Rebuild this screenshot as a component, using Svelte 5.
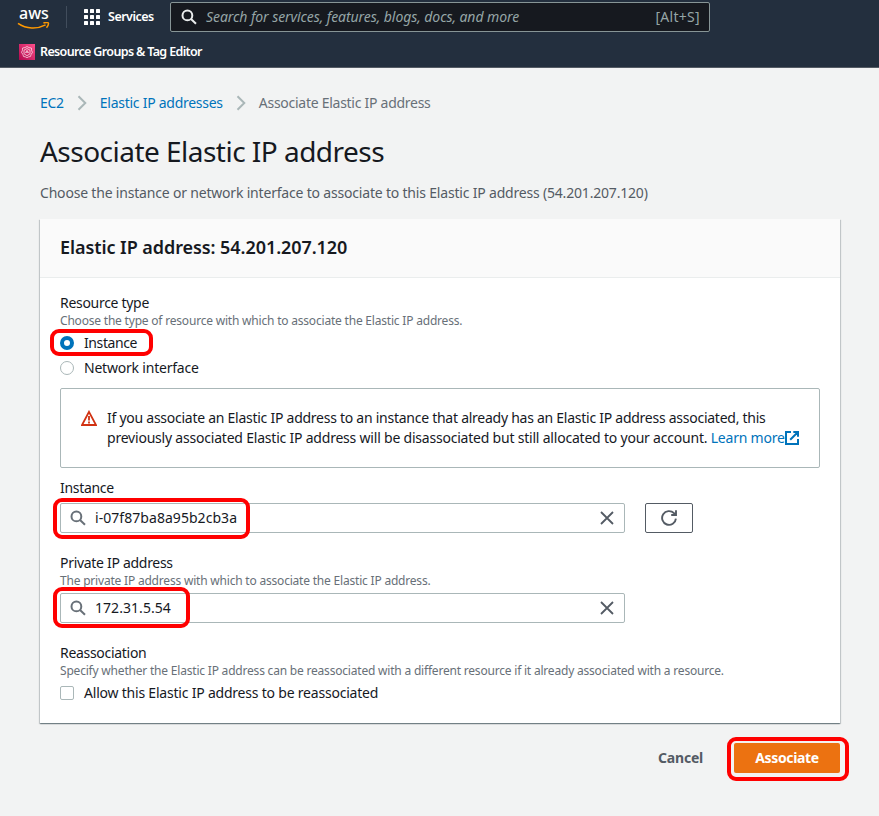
<script lang="ts">
  let resourceType = $state("instance");
  let allowReassociation = $state(false);

  let instance = $state("i-07f87ba8a95b2cb3a");
  let privateIp = $state("172.31.5.54");

  const address = "54.201.207.120";
</script>

{#snippet searchIcon()}
  <svg class="search-icon" viewBox="0 0 16 16">
    <circle cx="6.4" cy="6.4" r="4.9" />
    <path d="M10 10l5 4.8" />
  </svg>
{/snippet}

{#snippet chevron()}
  <svg class="chevron" viewBox="0 0 10 16">
    <path d="M1.5 1.2L8.3 8l-6.8 6.8" />
  </svg>
{/snippet}

{#snippet clearIcon()}
  <svg class="clear-icon" viewBox="0 0 14 14">
    <path d="M1 1l12 12M13 1L1 13" />
  </svg>
{/snippet}

<div class="page">
  <header class="nav">
    <div class="nav-main">
      <div class="logo">
        <span>aws</span>
        <svg viewBox="0 0 34 8">
          <path d="M1 1.4C9.5 7.2 20 7.4 28.6 2.9" />
          <path d="M26.4 1c2-.8 4.8-.7 5 .1.2.9-.5 3.2-1.9 4.6" />
        </svg>
      </div>
      <span class="divider"></span>
      <button class="services">
        <svg viewBox="0 0 16 16">
          {#each [0, 6, 12] as y}
            {#each [0, 6, 12] as x}
              <rect {x} {y} width="4" height="4" rx="0.6" />
            {/each}
          {/each}
        </svg>
        <span>Services</span>
      </button>
      <div class="nav-search">
        {@render searchIcon()}
        <span class="placeholder">Search for services, features, blogs, docs, and more</span>
        <span class="shortcut">[Alt+S]</span>
      </div>
    </div>
    <div class="nav-favorites">
      <svg viewBox="0 0 16 16">
        <defs>
          <linearGradient id="pink" x1="0" y1="1" x2="1" y2="0">
            <stop offset="0" stop-color="#b0084d" />
            <stop offset="1" stop-color="#ff4f8b" />
          </linearGradient>
        </defs>
        <rect width="16" height="16" fill="url(#pink)" />
        <path class="line" d="M8 2.5l2 1.1 2.4.4.2 2.5.9 1.8-1.3 2-.8 2.2-2 .4L8 13.7l-1.4-.8-2-.4-.8-2.2-1.3-2 .9-1.8.2-2.5L6 3.6z" />
        <path class="line" d="M5 6.2l3-1.7 3 1.7v3.6l-3 1.9-3-1.9zM6.4 9l1.6-2.6L9.6 9M7 8.2h2" />
      </svg>
      <span>Resource Groups &amp; Tag Editor</span>
    </div>
  </header>

  <main>
    <nav class="breadcrumbs">
      <a href="#ec2">EC2</a>
      {@render chevron()}
      <a href="#addresses">Elastic IP addresses</a>
      {@render chevron()}
      <span>Associate Elastic IP address</span>
    </nav>

    <h1>Associate Elastic IP address</h1>
    <p class="description">
      Choose the instance or network interface to associate to this Elastic IP address ({address})
    </p>

    <section class="card">
      <h2>Elastic IP address: {address}</h2>

      <div class="card-body">
        <div class="label">Resource type</div>
        <div class="hint">Choose the type of resource with which to associate the Elastic IP address.</div>
        <label class="option">
          <input type="radio" value="instance" bind:group={resourceType} />
          <span class="short">Instance</span>
          <i class="highlight instance-option"></i>
        </label>
        <label class="option second">
          <input type="radio" value="network" bind:group={resourceType} />
          <span>Network interface</span>
        </label>

        <div class="alert">
          <svg class="warning" viewBox="0 0 16 16">
            <path d="M8 1.8L15 15H1z" />
            <path d="M8 6v4.4M8 11.6v2" />
          </svg>
          <p>
            <span class="line-one">If you associate an Elastic IP address to an instance that already has an Elastic IP address associated, this</span><br />
            <span>previously associated Elastic IP address will be disassociated but still allocated to your account.</span>
            <a href="#learn">Learn more<svg class="external" viewBox="0 0 14 14">
              <path d="M6 1H1v12h12V8M8.3 1H13v4.7M13 1L5.2 8.8" />
            </svg></a>
          </p>
        </div>

        <div class="label">Instance</div>
        <div class="row">
          <div class="field">
            {@render searchIcon()}
            <input type="text" bind:value={instance} />
            <button aria-label="Clear" onclick={() => (instance = "")}>{@render clearIcon()}</button>
            <i class="highlight instance-field"></i>
          </div>
          <button class="refresh" aria-label="Refresh">
            <svg viewBox="0 0 16 16">
              <path d="M14.9 8.6A6.9 6.9 0 1 1 13 3.2l1.6 1.6M15 .2V5H10.2" />
            </svg>
          </button>
        </div>

        <div class="label spaced">Private IP address</div>
        <div class="hint">The private IP address with which to associate the Elastic IP address.</div>
        <div class="field">
          {@render searchIcon()}
          <input type="text" bind:value={privateIp} />
          <button aria-label="Clear" onclick={() => (privateIp = "")}>{@render clearIcon()}</button>
          <i class="highlight ip-field"></i>
        </div>

        <div class="label spaced">Reassociation</div>
        <div class="hint">Specify whether the Elastic IP address can be reassociated with a different resource if it already associated with a resource.</div>
        <label class="option">
          <input type="checkbox" bind:checked={allowReassociation} />
          <span>Allow this Elastic IP address to be reassociated</span>
        </label>
      </div>
    </section>

    <div class="actions">
      <button class="cancel">Cancel</button>
      <div class="submit">
        <button class="primary">Associate</button>
        <i class="highlight associate"></i>
      </div>
    </div>
  </main>
</div>

<style>
  :global(body) {
    background: #f2f3f3;
  }
  .page {
    min-height: 816px;
    background: #f2f3f3;
    color: #16191f;
    font: 14px/20px "Noto Sans", "Open Sans", sans-serif;
    white-space: nowrap;
  }
  svg {
    display: block;
    flex: none;
    fill: none;
  }
  button,
  input {
    font: inherit;
    color: inherit;
    letter-spacing: inherit;
  }
  button {
    padding: 0;
    border: none;
    background: none;
    cursor: pointer;
  }
  a {
    color: #0073bb;
    text-decoration: none;
  }

  .nav {
    box-sizing: border-box;
    height: 68px;
    background: #232f3e;
    border-bottom: 1px solid #545b64;
    color: #fff;
  }
  .nav-main {
    display: flex;
    align-items: center;
    height: 34px;
    padding-left: 17px;
  }
  .logo {
    width: 34px;
    font-size: 16px;
    font-weight: 500;
    line-height: 16px;
  }
  .logo span {
    display: block;
    padding-left: 2px;
  }
  .logo svg {
    width: 34px;
    height: 8px;
    margin-top: 1px;
    stroke: #f90;
    stroke-width: 1.5;
  }
  .divider {
    width: 1px;
    height: 22px;
    margin-left: 15px;
    background: #414d5c;
  }
  .services {
    display: flex;
    align-items: center;
    gap: 8px;
    width: 86px;
    margin-left: 17px;
    font-size: 12.5px;
    font-weight: 600;
    letter-spacing: -0.5px;
  }
  .services svg {
    width: 16px;
    height: 16px;
    fill: #fff;
  }
  .nav-search {
    box-sizing: border-box;
    display: flex;
    align-items: center;
    width: 540px;
    height: 30px;
    padding: 0 9px 0 10px;
    border: 1px solid #879596;
    border-radius: 2px;
    background: #16191f;
    color: #95a5a6;
  }
  .search-icon {
    width: 16px;
    height: 16px;
    stroke: #687078;
    stroke-width: 2;
  }
  .nav-search .search-icon {
    stroke: #eaeded;
  }
  .placeholder {
    margin-left: 9px;
    font-style: italic;
    letter-spacing: -0.07px;
  }
  .shortcut {
    margin-left: auto;
    letter-spacing: 0.3px;
  }
  .nav-favorites {
    display: flex;
    align-items: center;
    gap: 5px;
    height: 34px;
    padding: 1px 0 0 19px;
    font-size: 12.5px;
    font-weight: 600;
    letter-spacing: -0.65px;
  }
  .nav-favorites svg {
    width: 16px;
    height: 16px;
  }
  .line {
    stroke: #fff;
    stroke-width: 0.65;
  }

  main {
    padding: 25px 39px 0 40px;
    letter-spacing: -0.21px;
  }
  .breadcrumbs {
    display: flex;
    align-items: center;
    color: #687078;
    letter-spacing: -0.27px;
  }
  .chevron {
    width: 10px;
    height: 16px;
    margin: 0 13px;
    stroke: #aab7b8;
    stroke-width: 2;
  }
  h1 {
    margin: 20px 0 14px;
    font-size: 28px;
    font-weight: 400;
    line-height: 36px;
    letter-spacing: -0.52px;
  }
  .description {
    margin: 0;
    color: #545b64;
    letter-spacing: -0.19px;
  }
  .card {
    margin-top: 16px;
    background: #fff;
    box-shadow:
      0 1px 1px 0 rgba(0, 28, 36, 0.35),
      1px 1px 1px 0 rgba(0, 28, 36, 0.15),
      -1px 1px 1px 0 rgba(0, 28, 36, 0.15);
  }
  h2 {
    margin: 0;
    padding: 17px 20px 19px;
    background: #fafafa;
    border-bottom: 1px solid #eaeded;
    font-size: 18px;
    font-weight: 600;
    line-height: 22px;
    letter-spacing: -0.07px;
  }
  .card-body {
    padding: 15px 20px 20px;
  }
  .label {
    letter-spacing: -0.3px;
  }
  .label.spaced {
    margin-top: 20px;
  }
  .hint {
    margin-bottom: 4px;
    color: #687078;
    font-size: 12px;
    line-height: 16px;
    letter-spacing: -0.2px;
  }
  .option {
    position: relative;
    display: flex;
    align-items: center;
  }
  .option.second {
    margin-top: 5px;
  }
  .option .short {
    letter-spacing: -0.4px;
  }
  .option input {
    appearance: none;
    box-sizing: border-box;
    width: 14px;
    height: 14px;
    margin: 0 10px 0 0;
    border: 1px solid #aab7b8;
    border-radius: 2px;
    background: #fff;
  }
  .option input[type="radio"] {
    border-radius: 50%;
  }
  .option input[type="radio"]:checked {
    border: 4px solid #0073bb;
  }
  .alert {
    box-sizing: border-box;
    display: flex;
    height: 80px;
    margin: 10px 0;
    padding: 19px 20px;
    border: 1px solid #aab7b8;
    border-radius: 2px;
  }
  .alert p {
    margin: 0 0 0 10px;
  }
  .line-one {
    letter-spacing: -0.26px;
  }
  .warning {
    width: 16px;
    height: 16px;
    margin-top: 2px;
    stroke: #d13212;
    stroke-width: 1.8;
  }
  .external {
    display: inline-block;
    width: 14px;
    height: 14px;
    vertical-align: -2px;
    stroke: #0073bb;
    stroke-width: 2;
  }
  .row {
    display: flex;
    gap: 20px;
    margin-top: 5px;
  }
  .field {
    position: relative;
    box-sizing: border-box;
    display: flex;
    align-items: center;
    width: 565px;
    height: 30px;
    padding: 0 10px 0 9px;
    border: 1px solid #aab7b8;
    border-radius: 2px;
    letter-spacing: 0.05px;
  }
  .field input {
    flex: 1;
    min-width: 0;
    margin-left: 9px;
    padding: 0;
    border: none;
    outline: none;
    background: none;
  }
  .clear-icon {
    width: 14px;
    height: 14px;
    stroke: #545b64;
    stroke-width: 1.8;
  }
  .refresh {
    box-sizing: border-box;
    display: flex;
    align-items: center;
    justify-content: center;
    width: 48px;
    height: 30px;
    border: 1px solid #545b64;
    border-radius: 2px;
  }
  .refresh svg {
    width: 16px;
    height: 16px;
    stroke: #545b64;
    stroke-width: 1.9;
  }
  .actions {
    display: flex;
    justify-content: flex-end;
    align-items: center;
    gap: 31px;
    margin-top: 20px;
    font-weight: 700;
  }
  .cancel {
    color: #545b64;
  }
  .submit {
    position: relative;
  }
  .primary {
    display: block;
    width: 106px;
    height: 30px;
    border-radius: 2px;
    background: #ec7211;
    color: #fff;
    letter-spacing: -0.35px;
  }

  /* Red callouts laid over the controls used in this step. */
  .highlight {
    position: absolute;
    box-sizing: border-box;
    border: 4px solid #f00;
    border-radius: 9px;
    pointer-events: none;
  }
  .instance-option {
    left: -10px;
    top: -4px;
    width: 103px;
    height: 27px;
  }
  .instance-field {
    left: -8px;
    top: -6px;
    width: 197px;
    height: 41px;
  }
  .ip-field {
    left: -8px;
    top: -7px;
    width: 137px;
    height: 41px;
  }
  .associate {
    left: -7px;
    top: -6px;
    width: 122px;
    height: 44px;
  }
</style>
